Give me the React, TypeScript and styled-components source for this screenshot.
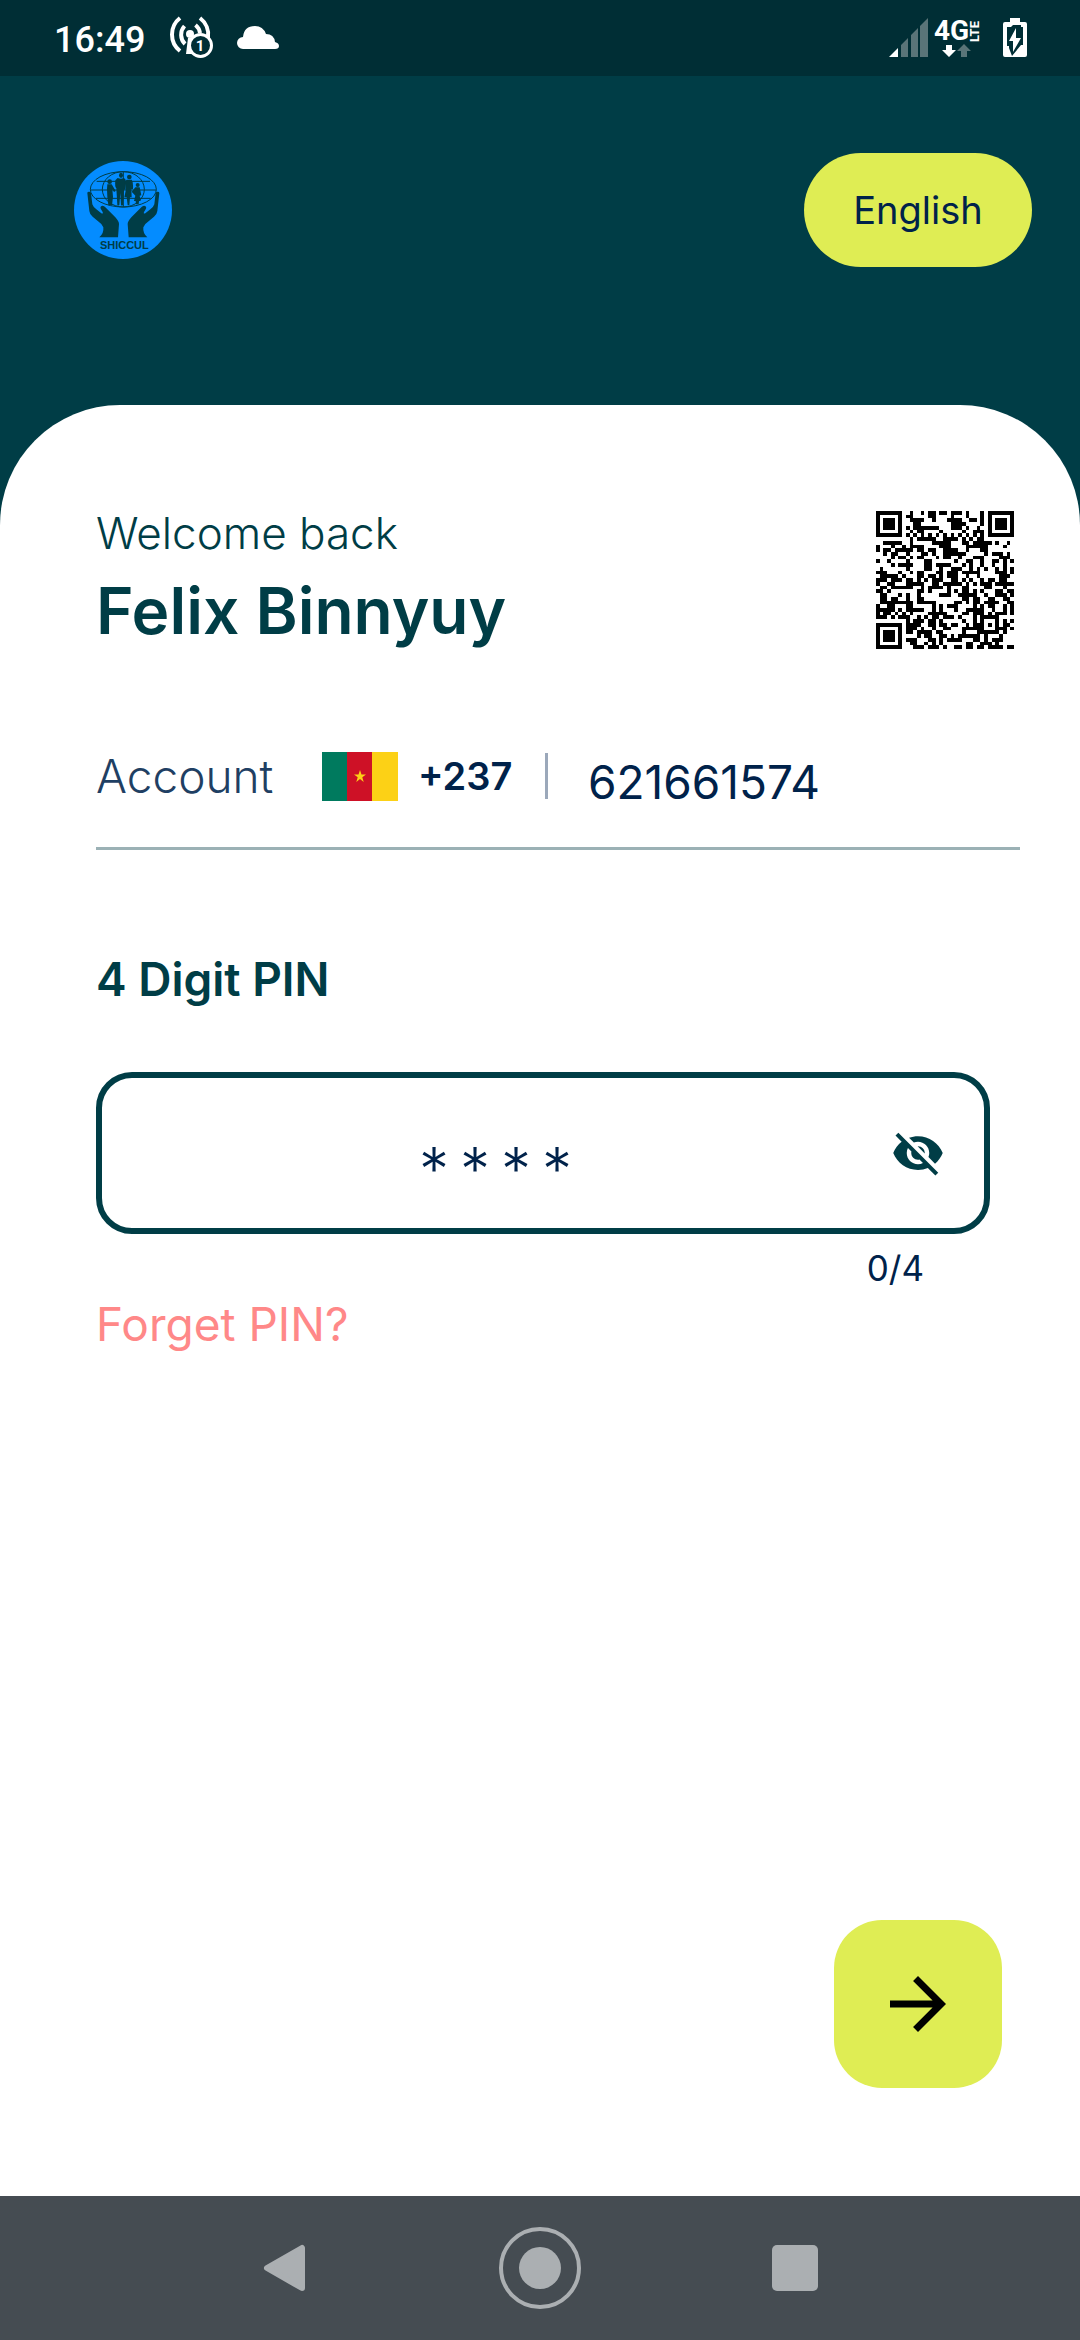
import React, { useState } from 'react';
import styled, { createGlobalStyle } from 'styled-components';

const color = {
  teal: '#003d46',
  tealDark: '#002e35',
  navy: '#00224a',
  lime: '#dfed54',
  coral: '#ff8888',
  rule: '#9bb1b5',
  nav: '#454c52',
  navIcon: '#abafb2',
};

const GlobalStyle = createGlobalStyle`
  * { box-sizing: border-box; }
  body {
    margin: 0;
    background: ${color.teal};
    font-family: Inter, Roboto, "Liberation Sans", sans-serif;
  }
  button, input { font-family: inherit; }
`;

const Screen = styled.div`
  display: flex;
  flex-direction: column;
  min-height: 100vh;
  background: ${color.teal};
`;

const StatusBar = styled.div`
  display: flex;
  align-items: center;
  justify-content: space-between;
  height: 76px;
  padding: 0 53px 0 54px;
  background: ${color.tealDark};
  color: #fff;
`;

const StatusGroup = styled.div<{ $gap: number }>`
  display: flex;
  align-items: center;
  gap: ${(p) => p.$gap}px;
`;

const Clock = styled.span`
  font: 500 36px/40px Roboto, sans-serif;
  padding-top: 4px;
`;

const Header = styled.header`
  display: flex;
  align-items: flex-start;
  justify-content: space-between;
  padding: 77px 48px 138px 74px;
`;

const LogoBox = styled.div`
  display: flex;
  align-items: center;
  height: 114px;
`;

const LanguageButton = styled.button`
  width: 228px;
  height: 114px;
  padding: 0;
  border: 0;
  border-radius: 57px;
  background: ${color.lime};
  color: ${color.navy};
  font-size: 38px;
  line-height: 48px;
`;

const Sheet = styled.main`
  display: flex;
  flex: 1;
  flex-direction: column;
  padding: 100px 60px 108px 96px;
  border-radius: 120px 120px 0 0;
  background: #fff;
`;

const Identity = styled.section`
  display: flex;
  align-items: flex-end;
  justify-content: space-between;
  padding-right: 6px;
`;

const Greeting = styled.p`
  margin: 0 0 12px;
  color: ${color.teal};
  font-size: 44px;
  font-weight: 300;
  line-height: 56px;
`;

const Name = styled.h1`
  margin: 0;
  color: ${color.teal};
  font-size: 64px;
  font-weight: 600;
  line-height: 76px;
`;

const AccountRow = styled.section`
  display: flex;
  align-items: center;
  height: 145px;
  margin-top: 56px;
  border-bottom: 3px solid ${color.rule};
  color: ${color.navy};
`;

const AccountLabel = styled.label`
  width: 226px;
  color: #1f3f63;
  font-size: 46px;
  font-weight: 300;
  line-height: 56px;
`;

const DialCode = styled.span`
  font-size: 38px;
  font-weight: 600;
  line-height: 48px;
`;

const Divider = styled.span`
  width: 3px;
  height: 46px;
  background: #9ba8ba;
`;

const Prefix = styled.div`
  display: flex;
  align-items: center;
  justify-content: space-between;
  width: 150px;
  padding-left: 20px;
`;

const PhoneInput = styled.input`
  flex: 1;
  min-width: 0;
  padding: 12px 0 0 40px;
  border: 0;
  outline: 0;
  background: transparent;
  color: ${color.navy};
  font-size: 46px;
  line-height: 56px;
`;

const PinLabel = styled.label`
  margin: 101px 0 65px;
  color: ${color.teal};
  font-size: 46px;
  font-weight: 600;
  line-height: 56px;
`;

const PinField = styled.div`
  display: flex;
  align-items: center;
  height: 162px;
  margin-right: 30px;
  padding: 0 39px 0 54px;
  border: 6px solid ${color.teal};
  border-radius: 36px;
`;

const PinInput = styled.input`
  flex: 1;
  min-width: 0;
  padding: 32px 56px 0 0;
  border: 0;
  outline: 0;
  background: transparent;
  color: ${color.navy};
  font-size: 60px;
  font-weight: 300;
  line-height: 76px;
  text-align: center;
  &::placeholder { color: ${color.navy}; opacity: 1; }
`;

const IconButton = styled.button`
  display: flex;
  padding: 0;
  border: 0;
  background: transparent;
  color: ${color.teal};
`;

const Counter = styled.output`
  align-self: flex-end;
  margin: 14px 96px 8px 0;
  color: ${color.navy};
  font-size: 35px;
  line-height: 40px;
`;

const ForgetLink = styled.a`
  align-self: flex-start;
  color: ${color.coral};
  font-size: 46px;
  line-height: 56px;
  text-decoration: none;
`;

const NextButton = styled.button`
  display: flex;
  align-items: center;
  justify-content: center;
  align-self: flex-end;
  width: 168px;
  height: 168px;
  margin: auto 18px 0 0;
  padding: 0;
  border: 0;
  border-radius: 48px;
  background: ${color.lime};
  color: #000;
`;

const NavBar = styled.nav`
  display: flex;
  align-items: center;
  justify-content: center;
  gap: 190px;
  height: 144px;
  background: ${color.nav};
`;

const NavButton = styled.button`
  display: flex;
  padding: 0;
  border: 0;
  background: transparent;
  color: ${color.navIcon};
`;

const QR_SIZE = 37;

function isDark(x: number, y: number): boolean {
  const last = QR_SIZE - 1;
  for (const [cx, cy] of [[3, 3], [last - 3, 3], [3, last - 3]]) {
    const d = Math.max(Math.abs(x - cx), Math.abs(y - cy));
    if (d <= 4) return d === 3 || d <= 1;
  }
  const a = Math.max(Math.abs(x - 30), Math.abs(y - 30));
  if (a <= 2) return a !== 1;
  if (x === 6 || y === 6) return (x + y) % 2 === 0;
  let h = Math.imul(x + 11, 374761393) + Math.imul(y + 7, 668265263);
  h = Math.imul(h ^ (h >>> 13), 1274126177);
  return ((h ^ (h >>> 16)) & 255) < 132;
}

function QrCode() {
  let d = '';
  for (let y = 0; y < QR_SIZE; y++) {
    for (let x = 0; x < QR_SIZE; x++) {
      if (isDark(x, y)) d += `M${x} ${y}h1v1h-1z`;
    }
  }
  return (
    <svg width="138" height="138" viewBox="0 0 37 37" shapeRendering="crispEdges" role="img" aria-label="Account QR code">
      <path d={d} fill="#000" />
    </svg>
  );
}

function Hand() {
  return (
    <path d="M82 129q0-4 5-4 5 0 6 4l4 34q3 9 12 15l15 12q7 2 4-4l-5-8q-4-7 2-10 6-2 11 4l30 30q11 12 11 20l-3 40h-56q14-12 12-30-4-11-14-17l-18-15q-9-7-10-17z" fill={color.teal} />
  );
}

function Logo() {
  return (
    <svg width="98" height="98" viewBox="42 33 294 294" role="img" aria-label="SHICCUL">
      <circle cx="189" cy="180" r="147" fill="#048cff" />
      <g fill="none" stroke={color.teal} strokeWidth="3">
        <ellipse cx="190" cy="118" rx="99" ry="53" />
        <ellipse cx="190" cy="118" rx="63" ry="53" />
        <path d="M110 94h160M91 120h198M108 145h164M190 65v106" />
      </g>
      <g fill={color.teal}>
        <ellipse cx="183" cy="76" rx="6" ry="8" />
        <path d="M173 84q10 5 19 0l5 5v30h-5l-3 46q-4 3-6 0l-2-36-3 36q-4 3-6 0l-3-50q-5-4-3-24z" />
        <circle cx="208" cy="81" r="7" />
        <path d="M200 89h15q5 7 4 28h-5l1 25h-5l-2 24h-5l-3-24h-7l5-24-4-23z" />
        <circle cx="149" cy="95" r="7" />
        <path d="M142 103h13l12 20-5 3-5-8 2 22-3 26h-11l-3-26-1-22z" />
        <circle cx="233" cy="105" r="6" />
        <path d="M226 112h13l5 24-5 1 3 16h-5l-1 10h-8l-1-10h-5l4-16-11-12 4-4z" />
      </g>
      <Hand />
      <g transform="translate(380 0) scale(-1 1)"><Hand /></g>
      <text x="193" y="297" textAnchor="middle" fontFamily="Liberation Sans, sans-serif" fontWeight="700" fontSize="33" fill={color.teal}>SHICCUL</text>
    </svg>
  );
}

function HotspotIcon() {
  return (
    <svg width="44" height="44" viewBox="0 0 44 44" fill="none" stroke="#fff" strokeWidth="4" aria-hidden="true">
      <path d="M11 2A21 21 0 0 0 11 35M15.500 10A13 13 0 0 0 16 28M31 2A21 21 0 0 1 39 22M26.500 9A13 13 0 0 1 31 17" />
      <circle cx="21" cy="18" r="4" fill="#fff" stroke="none" />
      <path d="M19 22h5v16h-7z" fill="#fff" stroke="none" />
      <circle cx="31.500" cy="29.500" r="11" fill={color.tealDark} strokeWidth="3" />
      <text x="31" y="35" textAnchor="middle" fontFamily="Roboto, sans-serif" fontSize="15" fontWeight="700" fill="#fff" stroke="none">1</text>
    </svg>
  );
}

function CloudIcon() {
  return (
    <svg width="42" height="24" viewBox="0 0 42 24" fill="#fff" aria-hidden="true">
      <path d="M6 23a6 6 0 0 1 0-12q1-11 12-11 8 0 11 8 8 0 9 8 4 1 4 4 0 3-4 3z" />
    </svg>
  );
}

function SignalIcon() {
  return (
    <svg width="39" height="40" viewBox="0 0 39 40" aria-hidden="true">
      <path d="M0 39L9 30V39z" fill="#fff" />
      <path d="M12 39V27l7-7v19zM22 39V17l7-7v29zM31 39V8l8-8v39z" fill="#5a7478" />
    </svg>
  );
}

function NetworkIcon() {
  return (
    <svg width="52" height="56" viewBox="0 -8 52 56" fill="#fff" role="img" aria-label="4G LTE">
      <text x="0" y="22" fontFamily="Roboto, sans-serif" fontWeight="700" fontSize="28">4G</text>
      <text transform="translate(45 24) rotate(-90)" fontFamily="Roboto, sans-serif" fontWeight="700" fontSize="13">LTE</text>
      <path d="M12 27h6v5h4l-7 7-7-7h4z" />
      <path d="M27 39h6v-6h4l-7-7-7 7h4z" fill="#5a7478" />
    </svg>
  );
}

function BatteryIcon() {
  return (
    <svg width="24" height="40" viewBox="0 0 24 40" aria-hidden="true">
      <path d="M7 0h10v4h5q2 0 2 2v31q0 2-2 2H2q-2 0-2-2V6q0-2 2-2h5z" fill="#fff" />
      <path d="M4 9h4l2-2h8v2h2v18h-2L9 38 6 30V28H4z" fill={color.tealDark} />
      <path d="M13 10v10h5L10 34V23H6z" fill="#fff" />
    </svg>
  );
}

function CameroonFlag() {
  return (
    <svg width="76" height="49" viewBox="0 0 76 49" role="img" aria-label="Cameroon">
      <path d="M0 0h26v49H0z" fill="#007a5e" />
      <path d="M25 0h26v49H25z" fill="#ce1126" />
      <path d="M50 0h26v49H50z" fill="#fcd116" />
      <path d="M38 18l1.500 4.500h4.500l-3.700 2.800 1.400 4.700-3.700-2.900-3.700 2.900 1.400-4.700-3.700-2.800h4.500z" fill="#fcd116" />
    </svg>
  );
}

function EyeOffIcon() {
  return (
    <svg width="54" height="54" viewBox="0 0 24 24" fill="currentColor" aria-hidden="true">
      <path d="M12 7c2.760 0 5 2.240 5 5 0 .65-.13 1.260-.36 1.830l2.920 2.920c1.510-1.260 2.700-2.890 3.430-4.750-1.730-4.390-6-7.500-11-7.500-1.400 0-2.740.25-3.980.7l2.160 2.160C10.740 7.130 11.350 7 12 7zM2 4.270l2.280 2.280.46.46C3.080 8.300 1.780 10.020 1 12c1.730 4.390 6 7.500 11 7.500 1.550 0 3.030-.3 4.380-.84l.42.42L19.730 22 21 20.730 3.270 3 2 4.270zM7.530 9.800l1.550 1.550c-.05.21-.08.43-.08.65 0 1.660 1.340 3 3 3 .22 0 .44-.03.65-.08l1.550 1.550c-.67.33-1.410.53-2.200.53-2.760 0-5-2.240-5-5 0-.79.2-1.530.53-2.200zm4.310-.78l3.150 3.150.02-.16c0-1.660-1.340-3-3-3l-.17.01z" />
    </svg>
  );
}

function ArrowIcon() {
  return (
    <svg width="84" height="84" viewBox="0 0 24 24" fill="currentColor" aria-hidden="true">
      <path d="M12 4l-1.410 1.410L16.170 11H4v2h12.170l-5.580 5.590L12 20l8-8z" />
    </svg>
  );
}

export default function App() {
  const [pin, setPin] = useState('');
  const [visible, setVisible] = useState(false);

  return (
    <Screen>
      <GlobalStyle />
      <StatusBar>
        <StatusGroup $gap={24}>
          <Clock>16:49</Clock>
          <HotspotIcon />
          <CloudIcon />
        </StatusGroup>
        <StatusGroup $gap={17}>
          <StatusGroup $gap={6}>
            <SignalIcon />
            <NetworkIcon />
          </StatusGroup>
          <BatteryIcon />
        </StatusGroup>
      </StatusBar>
      <Header>
        <LogoBox><Logo /></LogoBox>
        <LanguageButton type="button">English</LanguageButton>
      </Header>
      <Sheet>
        <Identity>
          <div>
            <Greeting>Welcome back</Greeting>
            <Name>Felix Binnyuy</Name>
          </div>
          <QrCode />
        </Identity>
        <AccountRow>
          <AccountLabel htmlFor="phone">Account</AccountLabel>
          <CameroonFlag />
          <Prefix>
            <DialCode>+237</DialCode>
            <Divider />
          </Prefix>
          <PhoneInput id="phone" type="tel" defaultValue="621661574" />
        </AccountRow>
        <PinLabel htmlFor="pin">4 Digit PIN</PinLabel>
        <PinField>
          <PinInput
            id="pin"
            type={visible || !pin ? 'text' : 'password'}
            inputMode="numeric"
            maxLength={4}
            placeholder={'*\u2009*\u2009*\u2009*'}
            value={pin}
            onChange={(e) => setPin(e.target.value)}
          />
          <IconButton type="button" aria-label="Show PIN" onClick={() => setVisible(!visible)}>
            <EyeOffIcon />
          </IconButton>
        </PinField>
        <Counter htmlFor="pin">{pin.length}/4</Counter>
        <ForgetLink href="#forget">Forget PIN?</ForgetLink>
        <NextButton type="button" aria-label="Continue"><ArrowIcon /></NextButton>
      </Sheet>
      <NavBar>
        <NavButton type="button" aria-label="Back">
          <svg width="46" height="48" viewBox="0 0 46 48" fill="currentColor" stroke="currentColor" strokeWidth="6" strokeLinejoin="round">
            <path d="M5 24L40 4v40z" />
          </svg>
        </NavButton>
        <NavButton type="button" aria-label="Home">
          <svg width="84" height="84" viewBox="0 0 84 84">
            <circle cx="42" cy="42" r="39" fill="none" stroke="currentColor" strokeWidth="4" />
            <circle cx="42" cy="42" r="21" fill="currentColor" />
          </svg>
        </NavButton>
        <NavButton type="button" aria-label="Recent apps">
          <svg width="46" height="46" viewBox="0 0 46 46"><rect width="46" height="46" rx="5" fill="currentColor" /></svg>
        </NavButton>
      </NavBar>
    </Screen>
  );
}
